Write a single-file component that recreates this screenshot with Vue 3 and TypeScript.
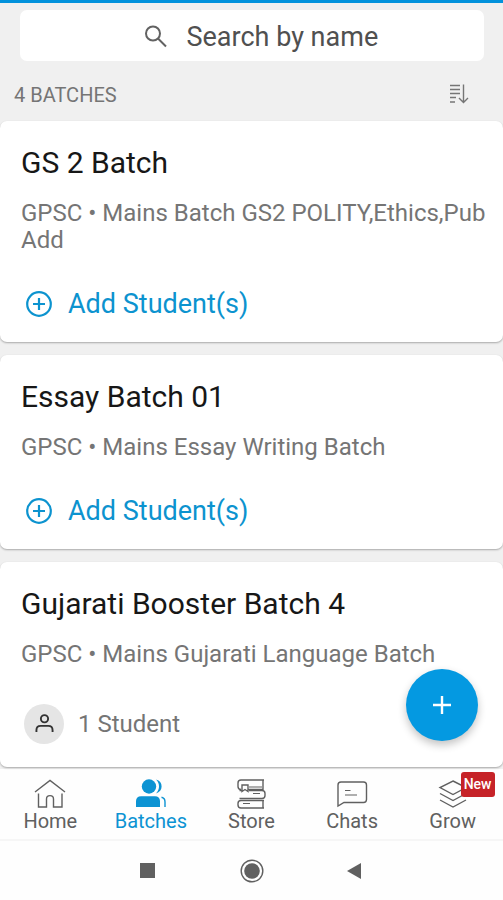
<script setup lang="ts">
import { computed, ref } from 'vue'

interface Batch {
  id: number
  name: string
  detail: string
  students: number
}

const total = 4
const query = ref('')
const activeTab = ref('Batches')

const batches: Batch[] = [
  { id: 1, name: 'GS 2 Batch', detail: 'GPSC • Mains Batch GS2 POLITY,Ethics,Pub Add', students: 0 },
  { id: 2, name: 'Essay Batch 01', detail: 'GPSC • Mains Essay Writing Batch', students: 0 },
  { id: 3, name: 'Gujarati Booster Batch 4', detail: 'GPSC • Mains Gujarati Language Batch', students: 1 },
]

const visible = computed(() =>
  batches.filter((b) => b.name.toLowerCase().includes(query.value.toLowerCase())),
)

const tabs: { name: string; badge?: string }[] = [
  { name: 'Home' },
  { name: 'Batches' },
  { name: 'Store' },
  { name: 'Chats' },
  { name: 'Grow', badge: 'New' },
]
</script>

<template>
  <div class="app">
    <header class="top">
      <label class="search">
        <svg class="search-icon" viewBox="0 0 24 24" aria-hidden="true">
          <circle cx="9" cy="8.5" r="7" />
          <path d="M14 13.5 L22 21.5" />
        </svg>
        <input v-model="query" type="text" placeholder="Search by name" aria-label="Search by name" />
      </label>
      <div class="summary">
        <h1>{{ total }} BATCHES</h1>
        <button class="sort" type="button" aria-label="Sort">
          <svg viewBox="0 0 20 20" aria-hidden="true">
            <path d="M1 1.5H11M1 5.5H11M1 9.5H11M1 13.5H7M1 18H6" />
            <path d="M14.5 0.5V18M10 14L14.5 18.5L19 14" />
          </svg>
        </button>
      </div>
    </header>

    <main class="content">
      <article v-for="b in visible" :key="b.id" class="card">
        <h2>{{ b.name }}</h2>
        <p class="detail">{{ b.detail }}</p>
        <div v-if="b.students" class="students">
          <span class="avatar">
            <svg viewBox="0 0 20 20" aria-hidden="true">
              <circle cx="10" cy="5" r="3.8" />
              <path d="M1.5 19V17C1.5 14 3.5 12.5 6 12.5H14C16.5 12.5 18.5 14 18.5 17V19" />
            </svg>
          </span>
          <span>{{ b.students }} Student</span>
        </div>
        <button v-else class="add" type="button">
          <svg viewBox="0 0 28 28" aria-hidden="true">
            <circle cx="14" cy="14" r="11.8" />
            <path d="M14 8V20M8 14H20" />
          </svg>
          Add Student(s)
        </button>
      </article>
      <button class="fab" type="button" aria-label="Create batch">
        <svg viewBox="0 0 20 20" aria-hidden="true"><path d="M10 1V19M1 10H19" /></svg>
      </button>
    </main>

    <nav class="tabs">
      <button
        v-for="t in tabs"
        :key="t.name"
        type="button"
        class="tab"
        :class="{ active: t.name === activeTab }"
        @click="activeTab = t.name"
      >
        <span class="tab-icon">
          <svg v-if="t.name === 'Home'" viewBox="0 0 32 30" aria-hidden="true">
            <path d="M1 13L16 1.5L31 13M4.5 14.5V28H12.5V20C12.5 15.5 19.5 15.5 19.5 20V28H28V14.5" />
          </svg>
          <svg v-else-if="t.name === 'Batches'" viewBox="0 0 32 30" aria-hidden="true">
            <g class="solid">
              <circle cx="14" cy="7.5" r="7.2" />
              <path d="M1 28V22C1 19 3 17.2 6 17.2H20C23 17.2 25 19 25 22V28Z" />
              <path d="M21 0.6C28.5 2 28.5 13 21 14.4C25 10.5 25 4.5 21 0.6Z" />
            </g>
            <path d="M26.5 18.3C29 18.8 30 20.5 30 23V28" />
          </svg>
          <svg v-else-if="t.name === 'Store'" viewBox="0 0 32 30" aria-hidden="true">
            <path d="M29 1H6Q3 1 3 4V7.5Q3 10.5 6 10.5M28 1V10.5H13" />
            <path d="M7 6H13V12.5L10 10.5L7 12.5Z" />
            <path d="M14 11.5H27Q30 11.5 30 14.5V16.5Q30 19.5 27 19.5H4.5M7 11.5H4.5" />
            <path d="M29 21.5H6Q3 21.5 3 24.5V26Q3 29 6 29H29M28 21.5V29" />
            <path class="thin" d="M14 8H27M18 14.5H25M8 24.5H15" />
          </svg>
          <svg v-else-if="t.name === 'Chats'" viewBox="0 0 32 30" aria-hidden="true">
            <path d="M5 3H27.5Q30.5 3 30.5 6V20.5Q30.5 23.5 27.5 23.5H8L2 27V6Q2 3 5 3Z" />
            <path class="thin" d="M9 11.5H14.5M9 16H21" />
          </svg>
          <svg v-else viewBox="0 0 32 30" aria-hidden="true">
            <path d="M16 2L29 8.5L16 15.5L3 8.5Z" />
            <path d="M3 14.5L16 21.5L29 14.5M3 21L16 28L29 21" />
          </svg>
          <span v-if="t.badge" class="badge">{{ t.badge }}</span>
        </span>
        <span>{{ t.name }}</span>
      </button>
    </nav>

    <footer class="system">
      <button type="button" aria-label="Recent apps">
        <svg viewBox="0 0 24 24" aria-hidden="true"><rect x="4" y="4" width="15" height="15" /></svg>
      </button>
      <button type="button" aria-label="Home screen">
        <svg viewBox="0 0 24 24" aria-hidden="true">
          <circle class="ring" cx="12" cy="12" r="10.8" />
          <circle cx="12" cy="12" r="7.8" />
        </svg>
      </button>
      <button type="button" aria-label="Back">
        <svg viewBox="0 0 24 24" aria-hidden="true"><path d="M3 12L17 4V20Z" /></svg>
      </button>
    </footer>
  </div>
</template>

<style>
body {
  margin: 0;
  background: #fefefe;
}
</style>

<style scoped>
.app {
  display: flex;
  flex-direction: column;
  min-height: 100vh;
  box-sizing: border-box;
  border-top: 3px solid #0292dc;
  background: #f0f0f0;
  font-family: Roboto, "Liberation Sans", sans-serif;
  color: #757575;
}
h1,
h2,
p {
  margin: 0;
  font-weight: 400;
}
button {
  margin: 0;
  padding: 0;
  border: 0;
  background: none;
  color: inherit;
  font: inherit;
  cursor: pointer;
}
svg {
  display: block;
  fill: none;
  stroke: currentColor;
}
.top {
  padding-top: 7px;
}
.search {
  display: flex;
  align-items: center;
  justify-content: center;
  gap: 19px;
  height: 51px;
  margin: 0 19px 0 20px;
  padding: 2px 0 0 24px;
  box-sizing: border-box;
  border-radius: 7px;
  background: #fff;
}
.search-icon {
  width: 24px;
  height: 24px;
  stroke: #626262;
  stroke-width: 2;
}
.search input {
  width: 198px;
  padding: 0;
  border: 0;
  outline: 0;
  background: none;
  color: #505050;
  font: 27px/36px Roboto, "Liberation Sans", sans-serif;
}
.search input::placeholder {
  color: #505050;
  opacity: 1;
}
.summary {
  display: flex;
  align-items: center;
  justify-content: space-between;
  height: 60px;
  padding: 6px 34px 0 14px;
  box-sizing: border-box;
}
.summary h1 {
  font-size: 20px;
  line-height: 24px;
  padding-top: 2px;
}
.sort svg {
  width: 20px;
  height: 20px;
  stroke-width: 1.4;
}
.content {
  position: relative;
  display: flex;
  flex: 1;
  flex-direction: column;
  gap: 13px;
  padding-bottom: 2px;
}
.card {
  padding: 24px 16px 12px 21px;
  border-radius: 7px;
  background: #fff;
  box-shadow: 0 1px 2px rgba(0, 0, 0, 0.3);
}
.card h2 {
  color: #171717;
  font-size: 30px;
  line-height: 36px;
}
.detail {
  margin-top: 19px;
  font-size: 24px;
  line-height: 27px;
}
.add,
.students {
  display: flex;
  align-items: center;
  margin-top: 24px;
}
.add {
  gap: 15px;
  height: 52px;
  padding-left: 4px;
  color: #0c93cf;
  font-size: 27px;
}
.add svg {
  width: 28px;
  height: 28px;
  stroke-width: 2.2;
}
.students {
  gap: 14px;
  height: 63px;
  padding-left: 3px;
  font-size: 24px;
}
.avatar {
  display: grid;
  place-items: center;
  width: 40px;
  height: 40px;
  border-radius: 50%;
  background: #e5e5e5;
  color: #333;
}
.avatar svg {
  width: 19px;
  height: 19px;
  stroke-width: 2;
}
.fab {
  position: absolute;
  right: 25px;
  bottom: 28px;
  display: grid;
  place-items: center;
  width: 72px;
  height: 72px;
  border-radius: 50%;
  background: #0499e1;
  color: #fff;
  box-shadow: 0 4px 8px rgba(0, 0, 0, 0.24);
}
.fab svg {
  width: 20px;
  height: 20px;
  stroke-width: 2.4;
}
.tabs {
  display: grid;
  grid-template-columns: repeat(5, 1fr);
  height: 70px;
  border-bottom: 2px solid #f6f6f6;
  background: #fefefe;
}
.tab {
  display: flex;
  flex-direction: column;
  align-items: center;
  padding-top: 10px;
  color: #606060;
  font-size: 20px;
  line-height: 24px;
}
.tab.active {
  color: #0c93d3;
}
.tab-icon {
  position: relative;
}
.tab-icon svg {
  width: 32px;
  height: 30px;
  stroke-width: 1.4;
}
.tab-icon .solid {
  fill: currentColor;
  stroke: none;
}
.tab-icon .thin {
  stroke-width: 1;
}
.badge {
  position: absolute;
  top: -7px;
  left: 24px;
  padding: 0 3px;
  border-radius: 3px;
  background: #c62328;
  color: #fff;
  font-size: 14px;
  font-weight: 500;
  line-height: 25px;
}
.system {
  display: flex;
  align-items: center;
  justify-content: center;
  gap: 80px;
  height: 60px;
  background: #fefefe;
  color: #606060;
}
.system svg {
  width: 24px;
  height: 24px;
  fill: currentColor;
  stroke: none;
}
.system .ring {
  fill: none;
  stroke: currentColor;
  stroke-width: 1.4;
}
</style>
